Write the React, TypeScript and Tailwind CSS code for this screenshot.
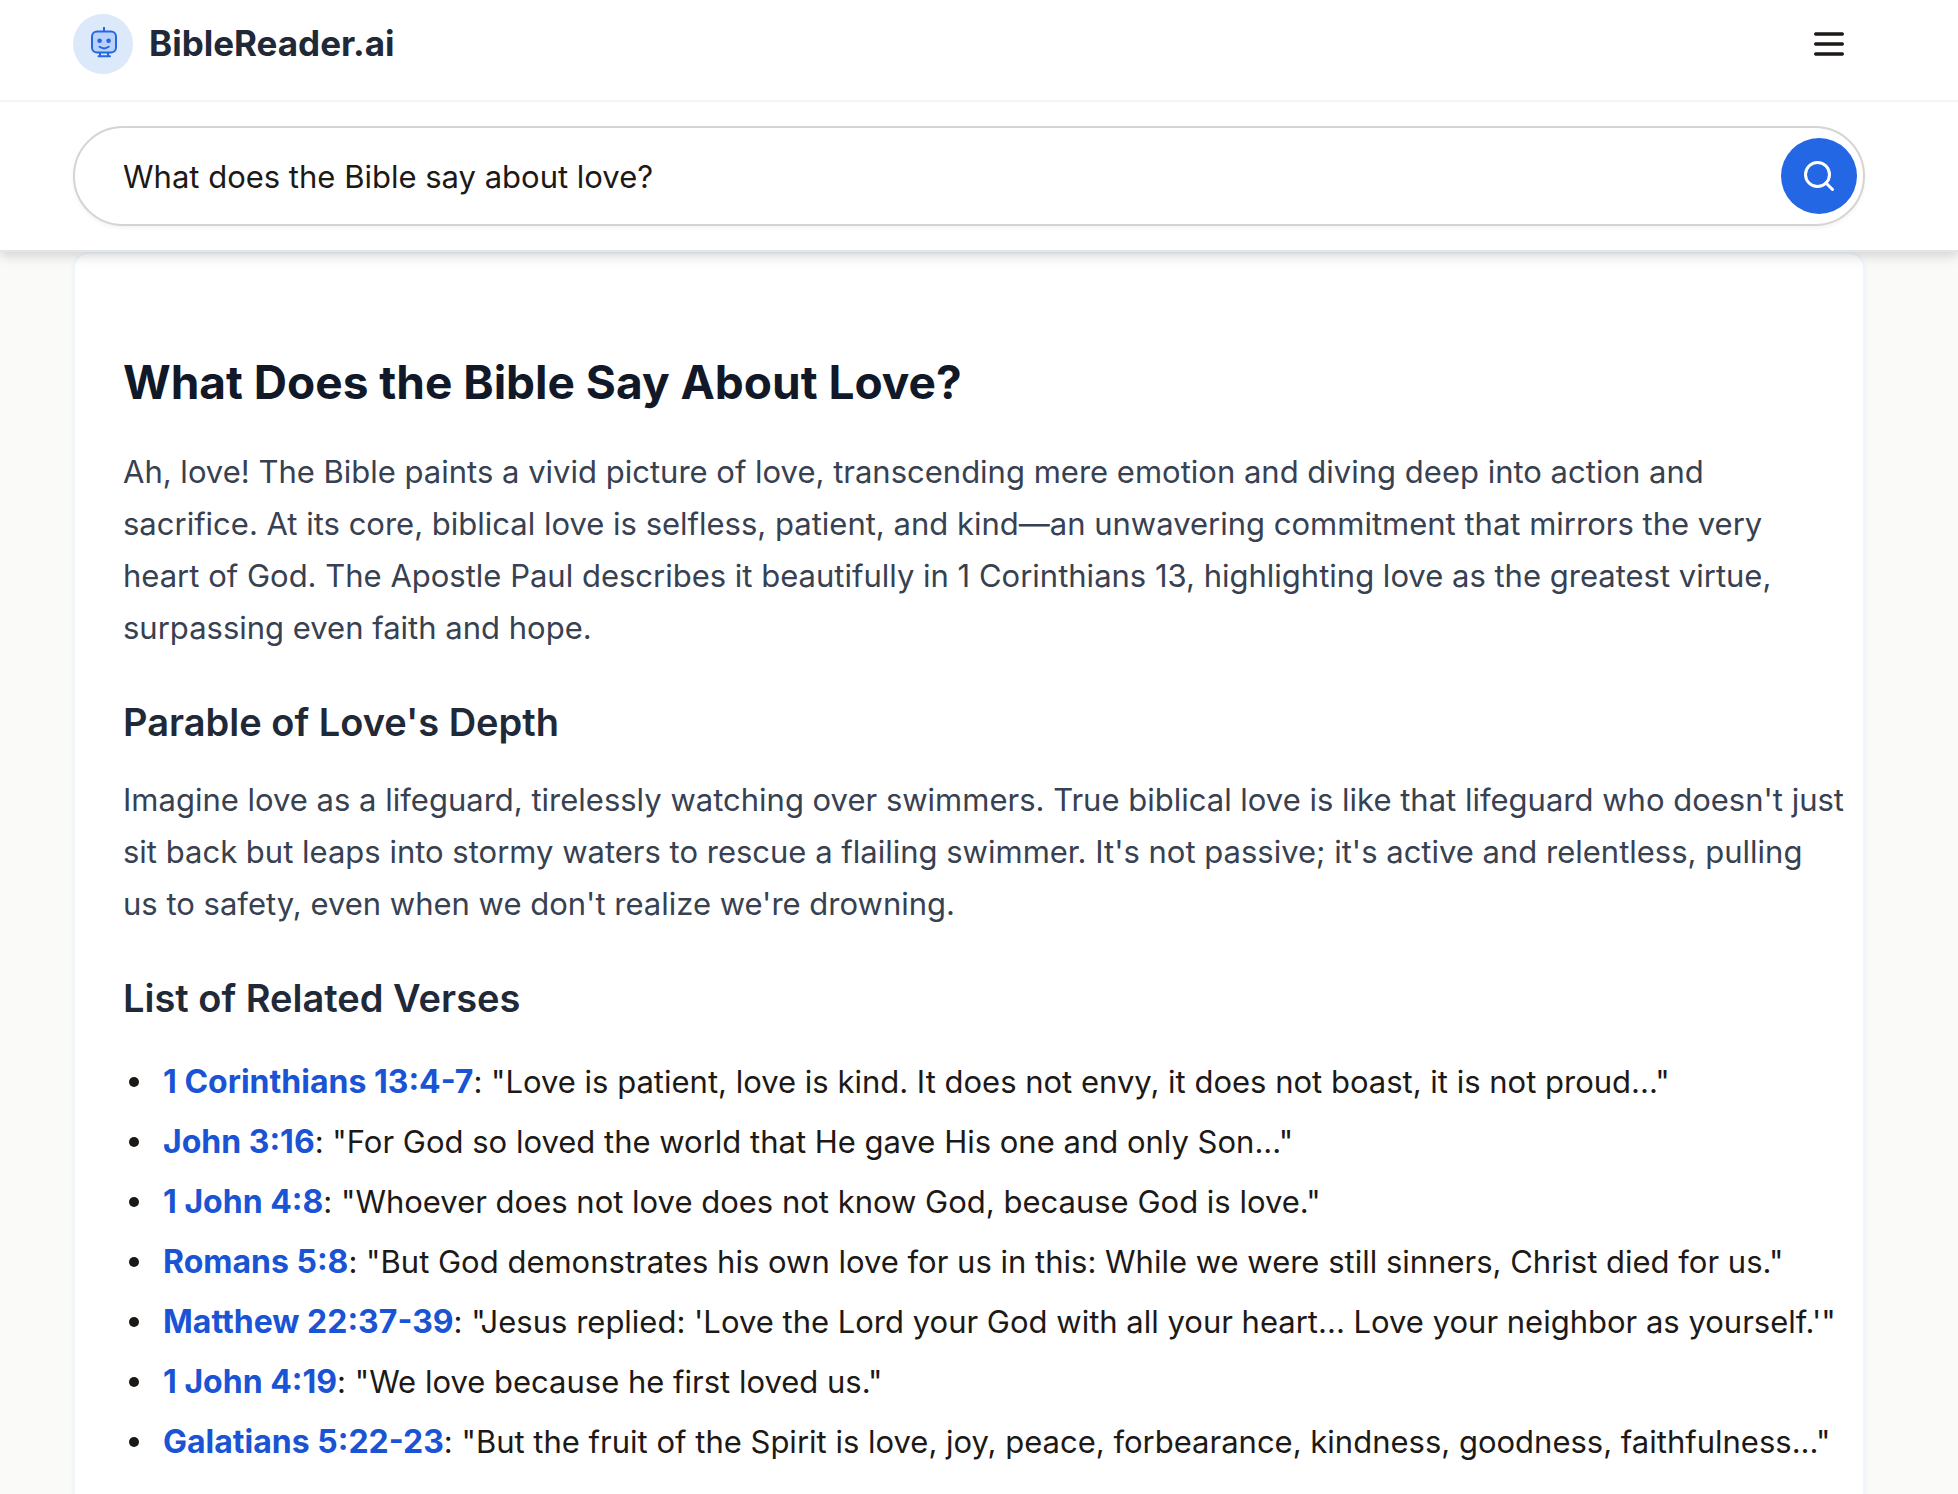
import { useState } from "react";
import { Search } from "lucide-react";

const verses = [
  { reference: "1 Corinthians 13:4-7", text: `"Love is patient, love is kind. It does not envy, it does not boast, it is not proud..."` },
  { reference: "John 3:16", text: `"For God so loved the world that He gave His one and only Son..."` },
  { reference: "1 John 4:8", text: `"Whoever does not love does not know God, because God is love."` },
  { reference: "Romans 5:8", text: `"But God demonstrates his own love for us in this: While we were still sinners, Christ died for us."` },
  { reference: "Matthew 22:37-39", text: `"Jesus replied: 'Love the Lord your God with all your heart... Love your neighbor as yourself.'"` },
  { reference: "1 John 4:19", text: `"We love because he first loved us."` },
  { reference: "Galatians 5:22-23", text: `"But the fruit of the Spirit is love, joy, peace, forbearance, kindness, goodness, faithfulness..."` },
];

function RobotIcon() {
  return (
    <svg aria-hidden="true" viewBox="0 0 32 32" className="size-8 overflow-visible" fill="none" stroke="#2467e4" strokeWidth="2" strokeLinecap="round">
      <path d="M17 -1v4" strokeLinecap="butt" />
      <rect x="5" y="3.5" width="24" height="21" rx="5" fill="#bad2f8" />
      <circle cx="12.6" cy="12.8" r="2.3" fill="#2467e4" stroke="none" />
      <circle cx="21.6" cy="12.8" r="2.3" fill="#2467e4" stroke="none" />
      <path d="M12.500 18.800q4.600 3.200 9.200 0" />
      <path d="M13 25v3M21 25v3M11.500 28.200h11.500" />
    </svg>
  );
}

function MenuIcon() {
  return (
    <svg aria-hidden="true" viewBox="0 0 24 24" className="size-10" fill="none" stroke="currentColor" strokeWidth="2" strokeLinecap="round">
      <path d="M4 6h16M4 12h16M4 18h16" />
    </svg>
  );
}

function Header() {
  return (
    <header className="border-b-2 border-[#f3f4f6] pr-5">
      <div className="mx-auto flex max-w-[1792px] items-center justify-between pt-3.5 pb-[26px]">
        <a href="#" className="flex items-center gap-4">
          <span className="flex size-15 items-center justify-center rounded-full bg-[#dce9fb]">
            <RobotIcon />
          </span>
          <span className="pb-0.5 text-[35px] leading-10 font-bold text-[#1f2937]">BibleReader.ai</span>
        </a>
        <button type="button" aria-label="Open menu" className="mr-4">
          <MenuIcon />
        </button>
      </div>
    </header>
  );
}

function SearchBar() {
  const [query, setQuery] = useState("What does the Bible say about love?");

  return (
    <form className="py-6 pr-5" onSubmit={(e) => e.preventDefault()}>
      <div className="mx-auto flex h-[100px] max-w-[1792px] items-center rounded-full border-2 border-[#d6d3d1] bg-white pr-1.5 pl-12 shadow-[0_2px_4px_rgba(0,0,0,0.05)]">
        <input
          type="text"
          aria-label="Search the Bible"
          value={query}
          onChange={(e) => setQuery(e.target.value)}
          className="h-full min-w-0 flex-1 text-[31px] outline-none"
        />
        <button type="submit" aria-label="Search" className="flex size-[76px] items-center justify-center rounded-full bg-[#2467e4] text-white">
          <Search className="size-9" />
        </button>
      </div>
    </form>
  );
}

export default function App() {
  return (
    <div className="min-h-screen bg-[#fafaf9] font-['Inter','Liberation_Sans',sans-serif] text-[#1c1917]">
      <div className="sticky top-0 z-10 border-b-2 border-[#e5e5e5] bg-white shadow-[0_8px_12px_rgba(0,0,0,0.06),0_4px_8px_rgba(0,0,0,0.08)]">
        <Header />
        <SearchBar />
      </div>

      <main className="pr-5">
        <article className="mx-auto max-w-[1792px] rounded-2xl border-2 border-[#eff6ff] bg-white pt-24 pr-3 pb-12 pl-12 shadow-[0_2px_4px_rgba(0,0,0,0.05)]">
          <h1 className="mb-8 text-[46px] leading-16 font-bold text-[#111827]">What Does the Bible Say About Love?</h1>
          <p className="mb-10 text-[31px] leading-[52px] text-[#374151]">
            Ah, love! The Bible paints a vivid picture of love, transcending mere emotion and diving deep into action and
            <br />
            sacrifice. At its core, biblical love is selfless, patient, and kind—an unwavering commitment that mirrors the very
            <br />
            heart of God. The Apostle Paul describes it beautifully in 1 Corinthians 13, highlighting love as the greatest virtue,
            <br />
            surpassing even faith and hope.
          </p>

          <h2 className="mb-6 text-[38px] leading-14 font-semibold text-[#1f2937]">Parable of Love's Depth</h2>
          <p className="mb-10 text-[31px] leading-[52px] text-[#374151]">
            Imagine love as a lifeguard, tirelessly watching over swimmers. True biblical love is like that lifeguard who doesn't just
            <br />
            sit back but leaps into stormy waters to rescue a flailing swimmer. It's not passive; it's active and relentless, pulling
            <br />
            us to safety, even when we don't realize we're drowning.
          </p>

          <h2 className="mb-8 text-[38px] leading-14 font-semibold text-[#1f2937]">List of Related Verses</h2>
          <ul className="flex flex-col gap-3 pl-10 text-[31px] leading-12">
            {verses.map((verse) => (
              <li
                key={verse.reference}
                className="before:mr-6 before:mb-1.5 before:-ml-[34px] before:inline-block before:size-2.5 before:rounded-full before:bg-[#1c1917]"
              >
                <a href="#" className="text-[32px] font-bold text-[#1a54d4]">{verse.reference}</a>: {verse.text}
              </li>
            ))}
          </ul>
        </article>
      </main>
    </div>
  );
}
